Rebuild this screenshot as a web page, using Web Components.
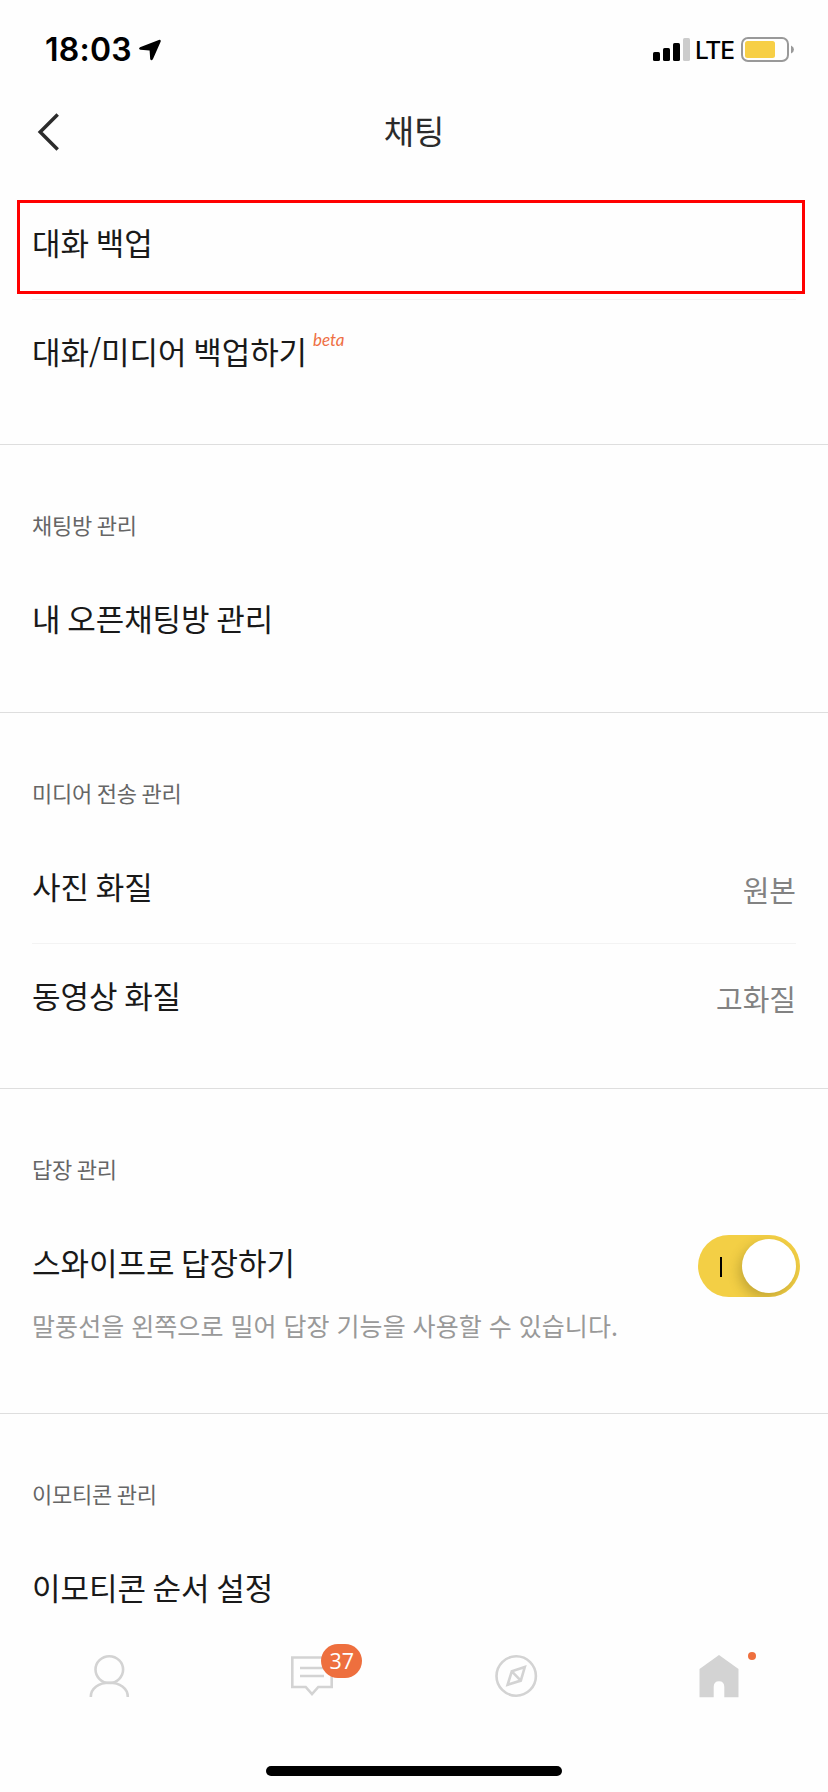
<!DOCTYPE html>
<html lang="ko">
<head>
<meta charset="utf-8">
<title>채팅</title>
<style>
html, body { margin: 0; padding: 0; background: #fefefe; }
body { width: 828px; height: 1792px; overflow: hidden; font-family: "Noto Sans CJK KR", "Noto Sans", sans-serif; }
</style>
</head>
<body>
<settings-screen>
  <status-bar slot="top" time="18:03" network="LTE"></status-bar>
  <nav-header slot="top">채팅</nav-header>
  <settings-group style="--pad-bottom:36px">
    <settings-row highlighted divided>대화 백업</settings-row>
    <settings-row>대화/미디어 백업하기<beta-tag slot="tag">beta</beta-tag></settings-row>
  </settings-group>
  <settings-group label="채팅방 관리">
    <settings-row>내 오픈채팅방 관리</settings-row>
  </settings-group>
  <settings-group label="미디어 전송 관리" style="--pad-bottom:36px">
    <settings-row divided>사진 화질<span slot="value">원본</span></settings-row>
    <settings-row>동영상 화질<span slot="value">고화질</span></settings-row>
  </settings-group>
  <settings-group label="답장 관리" style="--pad-bottom:65px">
    <settings-row>스와이프로 답장하기<toggle-switch slot="control"></toggle-switch></settings-row>
    <row-note>말풍선을 왼쪽으로 밀어 답장 기능을 사용할 수 있습니다.</row-note>
  </settings-group>
  <settings-group label="이모티콘 관리">
    <settings-row>이모티콘 순서 설정</settings-row>
  </settings-group>
  <tab-bar slot="bottom"></tab-bar>
</settings-screen>

<script>
const define = (name, html, setup) => {
  const t = document.createElement('template');
  t.innerHTML = html;
  customElements.define(name, class extends HTMLElement {
    constructor() {
      super();
      this.attachShadow({ mode: 'open' }).append(t.content.cloneNode(true));
    }
    connectedCallback() { if (setup) setup(this, this.shadowRoot); }
  });
};

define('settings-screen', `
<style>
:host { display: flex; flex-direction: column; width: 828px; height: 1792px; }
main { flex: 1; min-height: 0; overflow: hidden; }
</style>
<slot name="top"></slot><main><slot></slot></main><slot name="bottom"></slot>`);

define('status-bar', `
<style>
:host { display: flex; justify-content: space-between; align-items: center; height: 99px; padding: 0 34px 0 45px; box-sizing: border-box; font-family: Inter, sans-serif; color: #000; }
div { display: flex; align-items: center; }
.time { font-size: 32px; font-weight: 600; line-height: 40px; letter-spacing: .25px; width: 94px; padding-top: 1px; }
.net { font-size: 24.5px; font-weight: 500; line-height: 40px; width: 44px; margin-left: 5px; letter-spacing: -1.2px; padding-top: 1px; }
svg { display: block; }
</style>
<div><span class="time"></span>
<svg width="24" height="24" viewBox="0 0 24 24"><path d="M1 9.2 19.8 1.9Q22.3 1.4 21.6 3.8L14 21.1Q12.2 23.6 11.2 21L10.6 12.6 1.4 11.8Q-1 10.6 1 9.2Z"/></svg></div>
<div>
<svg width="37" height="25" viewBox="0 0 37 25"><rect y="15" width="7" height="9" rx="1.6"/><rect x="10" y="11" width="7" height="13" rx="1.6"/><rect x="20" y="6" width="7" height="18" rx="1.6"/><rect x="30" y="1" width="7" height="23" rx="1.6" fill="#ccc"/></svg>
<span class="net"></span>
<svg width="53" height="25" viewBox="0 0 53 25" style="margin-left:2px"><rect x="1" y="1" width="46" height="23" rx="6" fill="none" stroke="#999" stroke-width="2"/><rect x="4" y="4" width="30" height="17" rx="2.5" fill="#f7cf46"/><path d="M50 8.5Q53 9.8 53 12.5T50 16.5Z" fill="#999"/></svg>
</div>`, (el, r) => {
  r.querySelector('.time').textContent = el.getAttribute('time');
  r.querySelector('.net').textContent = el.getAttribute('network');
});

define('nav-header', `
<style>
:host { display: grid; grid-template-columns: 90px 1fr 90px; align-items: center; height: 92px; padding-bottom: 26px; box-sizing: border-box; color: #2b2b2b; }
h1 { margin: 0; padding-bottom: 5px; font-size: 33px; font-weight: 400; line-height: 48px; text-align: center; letter-spacing: -.2px; }
svg { display: block; margin-left: 37px; }
</style>
<svg width="24" height="38" viewBox="0 0 24 38" fill="none" stroke="#2b2b2b" stroke-width="3.5"><path d="M20.7 1.5 3.2 19 20.7 36.5"/></svg>
<h1><slot></slot></h1>`);

define('settings-group', `
<style>
:host { display: block; border-bottom: 1px solid #dedede; padding-bottom: var(--pad-bottom, 37px); }
h2 { margin: 0; padding: 59px 32px 22px; font-size: 22px; line-height: 41px; font-weight: 400; letter-spacing: -.2px; word-spacing: -1.3px; color: #666; }
h2[hidden] { display: none; }
</style>
<h2></h2><slot></slot>`, (el, r) => {
  const h = r.querySelector('h2');
  h.textContent = el.getAttribute('label') || '';
  h.hidden = !h.textContent;
});

define('settings-row', `
<style>
:host { display: flex; position: relative; justify-content: space-between; align-items: center; height: 108px; margin: 0 32px; color: #191919; }
:host([divided]) { border-bottom: 1px solid #f3f3f3; }
:host([highlighted])::after { content: ""; position: absolute; left: -15px; top: 9px; width: 782px; height: 88px; border: 3px solid #f00; }
.name { display: flex; font-size: 31px; line-height: 46px; padding-bottom: 6px; letter-spacing: -.05px; word-spacing: -1.9px; white-space: nowrap; }
.value { font-size: 29px; line-height: 42px; padding-bottom: 1px; letter-spacing: 0; color: #828282; }
</style>
<span class="name"><span><slot></slot></span><slot name="tag"></slot></span>
<span class="value"><slot name="value"></slot></span>
<slot name="control"></slot>`);

define('beta-tag', `
<style>:host { display: block; margin: 2px 0 0 6px; font: italic 17px/20px Lato, sans-serif; letter-spacing: -.1px; color: #ee6f43; }</style>
<slot></slot>`);

define('row-note', `
<style>:host { display: block; margin: -17px 32px 0; font-size: 25px; line-height: 46px; letter-spacing: .08px; word-spacing: -.2px; color: #999; white-space: nowrap; }</style>
<slot></slot>`);

define('toggle-switch', `
<style>
:host { display: flex; align-items: center; justify-content: space-between; box-sizing: border-box; width: 102px; height: 62px; margin: 2px -4px 0 0; padding: 0 4px 0 22px; border-radius: 31px; background: #f3cf45; overflow: hidden; }
i { width: 2px; height: 20px; margin-top: 2px; background: #000; }
b { width: 54px; height: 54px; border-radius: 50%; background: #fff; box-shadow: -3px 5px 12px rgba(90,75,20,.3); }
</style>
<i></i><b></b>`);

define('tab-bar', `
<style>
:host { display: flex; flex-direction: column; justify-content: space-between; align-items: center; height: 152px; padding-bottom: 16px; box-sizing: border-box; background: #fefefe; }
nav { display: grid; grid-template-columns: repeat(4, 1fr); width: 814px; padding-top: 14px; }
.tab { display: flex; justify-content: center; }
.icon { position: relative; width: 44px; height: 44px; }
svg { display: block; fill: none; stroke: #d3d3d3; stroke-width: 2.6; }
.badge { position: absolute; left: 31px; top: -10px; width: 41px; height: 34px; border-radius: 17px; background: #ee6f3e; color: #fff; font: 21.5px/34px "Open Sans", sans-serif; text-align: center; }
.dot { position: absolute; left: 50.7px; top: -2px; width: 8px; height: 8px; border-radius: 50%; background: #ee6f3e; }
.home { width: 296px; height: 10px; border-radius: 5px; background: #000; }
</style>
<nav>
<div class="tab"><div class="icon"><svg width="44" height="44" viewBox="0 0 44 44"><ellipse cx="22.3" cy="15.6" rx="13.8" ry="13.4"/><path d="M3.8 43C3.8 34 12 28.8 22.3 28.8S40.8 34 40.8 43"/></svg></div></div>
<div class="tab"><div class="icon"><svg width="44" height="44" viewBox="0 0 44 44"><path d="M2.3 3.5H41.7V33H28.3L22 40 15.7 33H2.3ZM10 14H34M10 22H34"/></svg><span class="badge">37</span></div></div>
<div class="tab"><div class="icon"><svg width="44" height="44" viewBox="0 0 44 44"><circle cx="22.2" cy="22" r="19.7"/><path d="M30.8 13 17.8 17.3 13.6 30.8 26.8 26.6ZM17.8 17.3 26.8 26.6"/></svg></div></div>
<div class="tab"><div class="icon"><svg width="44" height="44" viewBox="0 0 44 44"><path d="M22 1 41.5 15V43.3H27.3V33Q27.3 27.3 22 27.3T16.7 33V43.3H2.5V15Z" fill="#d3d3d3" stroke="none"/></svg><i class="dot"></i></div></div>
</nav>
<div class="home"></div>`);
</script>
</body>
</html>
